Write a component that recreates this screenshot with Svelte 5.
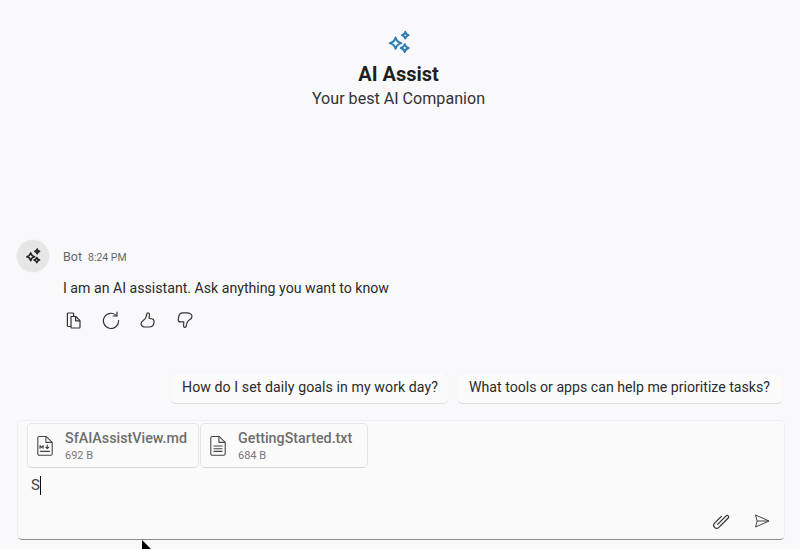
<script>
  const suggestions = [
    "How do I set daily goals in my work day?",
    "What tools or apps can help me prioritize tasks?",
  ];
  const files = [
    { name: "SfAIAssistView.md", size: "692 B", kind: "md" },
    { name: "GettingStarted.txt", size: "684 B", kind: "txt" },
  ];
  const sparkle = "M7.500 6.500Q8.500 10.500 12.500 11.500Q8.500 12.500 7.500 16.500Q6.500 12.500 2.500 11.500Q6.500 10.500 7.500 6.500Z M16 1.500Q16.500 4 19 4.500Q16.500 5 16 7.500Q15.500 5 13 4.500Q15.500 4 16 1.500Z M15.500 12.500Q16.200 15 19 15.800Q16.200 16.500 15.500 19.200Q14.800 16.500 12 15.800Q14.800 15 15.500 12.500Z";
</script>

<main>
  <header>
    <svg class="logo" width="24" height="24" viewBox="0 0 21 21" fill="none" stroke="#2b7cb3" stroke-width="1.700" stroke-linejoin="round"><path d={sparkle} /></svg>
    <h1>AI Assist</h1>
    <p>Your best AI Companion</p>
  </header>

  <section class="message">
    <div class="avatar">
      <svg width="16" height="16" viewBox="0 0 21 21" fill="none" stroke="#222" stroke-width="2.200" stroke-linejoin="round"><path d={sparkle} /></svg>
    </div>
    <div class="body">
      <div class="meta"><span class="who">Bot</span><span class="time">8:24 PM</span></div>
      <div class="text">I am an AI assistant. Ask anything you want to know</div>
      <div class="actions">
        <svg width="18" height="18" viewBox="0 0 18 18" fill="none" stroke="#333" stroke-width="1.200" stroke-linejoin="round"><path d="M6 15.500H3.200c-.5 0-.8-.3-.8-.8V2.800c0-.5.3-.8.8-.8h4.600c.5 0 .8.300.8.800V5" /><path d="M6 5.500h4.800L15 9.700v6.500c0 .5-.3.800-.8.800H6.800c-.5 0-.8-.3-.8-.8z" /><path d="M10.600 5.500v4.300H15" /></svg>
        <svg width="18" height="18" viewBox="0 0 18 18" fill="none" stroke="#333" stroke-width="1.200" stroke-linecap="round" stroke-linejoin="round"><path d="M14.500 4.600A7.600 7.600 0 1 0 16.600 9.600" /><path d="M15 1.200v3.800h-3.800" /></svg>
        <svg width="18" height="18" viewBox="0 0 18 18" fill="none" stroke="#333" stroke-width="1.200" stroke-linejoin="round"><path d="M9 1.800c1 0 1.500.8 1.500 1.900 0 1.600-.5 2.800-.3 3.600 1.200.6 3.400.4 4.200 1.200 1 1 .8 2.300.5 3.600-.4 2-1.800 3.900-4.400 3.900H6.500C4 16.200 2 14.800 2 12.800c0-1.700 1.300-2.700 2.500-3.500C6.600 8 7.600 5 7.800 3c.1-.7.500-1.200 1.200-1.200z" /></svg>
        <svg width="18" height="18" viewBox="0 0 18 18" fill="none" stroke="#333" stroke-width="1.200" stroke-linejoin="round"><path d="M9 16.400c-1 0-1.500-.8-1.500-1.900 0-1.600.5-2.800.3-3.600H4.200c-1.300 0-2.200-1-2-2.200l.6-3.500C3.200 3.200 4.600 1.800 6.800 1.800h4C13.500 1.800 16 3.200 16 5.400c0 1.700-1.300 2.700-2.500 3.400-2.100 1.300-3.100 4.600-3.300 6.400-.1.700-.5 1.200-1.200 1.200z" /></svg>
      </div>
    </div>
  </section>

  <div class="suggestions">
    {#each suggestions as s}
      <div class="chip">{s}</div>
    {/each}
  </div>

  <section class="composer">
    <div class="files">
      {#each files as f}
        <div class="file">
          <svg width="18" height="22" viewBox="0 0 20 24" fill="none" stroke="#444" stroke-width="1.200" stroke-linejoin="round">
            <path d="M2 3c0-1 .6-1.600 1.600-1.600h7.600L18 8v12.600c0 1-.6 1.600-1.600 1.600H3.600c-1 0-1.600-.6-1.600-1.600z" />
            <path d="M11 1.600V8h7" />
            {#if f.kind === "md"}
              <path d="M4.500 15v-3.500l1.700 2 1.700-2V15M12.500 10.500v4.500M10.500 13l2 2 2-2M4.500 18h11" stroke-width="1.300" />
            {:else}
              <path d="M5 12h10M5 15h10M5 18h10" />
            {/if}
          </svg>
          <div class="info">
            <div class="name">{f.name}</div>
            <div class="size">{f.size}</div>
          </div>
        </div>
      {/each}
    </div>
    <div class="input">S<span class="caret"></span></div>
    <div class="tools">
      <svg width="18" height="18" viewBox="1.500 1.500 15 15" fill="none" stroke="#333" stroke-width="1.050" stroke-linecap="round" stroke-linejoin="round"><path d="M9.350 5.110 3.690 10.770A2.500 2.500 0 0 0 7.230 14.310L15.010 6.530A1.250 1.250 0 0 0 13.240 4.760L6.170 11.830" /></svg>
      <svg width="18" height="18" viewBox="0 0 18 18" fill="none" stroke="#444" stroke-width="1" stroke-linejoin="round"><path d="M2.500 3 16 9 2.500 15 4.200 9z" /><path d="M4.200 9H16" /></svg>
    </div>
  </section>

  <svg class="pointer" width="12" height="12" viewBox="0 0 12 12"><path d="M1 0 L11 10 H1 Z" fill="#000" /></svg>
</main>

<style>
  :global(body) {
    margin: 0;
    background: #f9f9fb;
  }

  main {
    position: relative;
    width: 800px;
    height: 549px;
    overflow: hidden;
    box-sizing: border-box;
    font-family: Roboto, "Noto Sans", sans-serif;
    color: #1f1f1f;
  }

  header {
    display: flex;
    flex-direction: column;
    align-items: center;
    padding-top: 30px;
    margin-left: -3px;
  }

  .logo {
    display: block;
    margin-bottom: 6px;
  }

  h1 {
    margin: 0;
    font-size: 20px;
    font-weight: 700;
    line-height: 28px;
  }

  p {
    margin: 0;
    font-size: 16.100px;
    line-height: 21px;
    color: #333;
  }

  .message {
    display: flex;
    margin-top: 131px;
    padding-left: 17px;
  }

  .avatar {
    width: 32px;
    height: 32px;
    border-radius: 50%;
    background: #e6e6e6;
    box-shadow: 0 0 2px #e6e6e6;
    display: flex;
    align-items: center;
    justify-content: center;
  }

  .body {
    margin-left: 14px;
  }

  .meta {
    display: flex;
    align-items: baseline;
    gap: 6px;
    height: 20px;
    margin-top: 9px;
    color: #666;
    font-size: 12.500px;
  }

  .time {
    font-size: 10.500px;
  }

  .text {
    margin-top: 9px;
    font-size: 14.150px;
    line-height: 20px;
    color: #2a2a2a;
  }

  .actions {
    display: flex;
    gap: 19px;
    margin-top: 13px;
    padding-left: 2px;
  }

  .suggestions {
    display: flex;
    justify-content: flex-end;
    gap: 10px;
    margin-top: 44px;
    padding-right: 18px;
  }

  .chip {
    height: 30px;
    line-height: 29px;
    padding: 0 12px 0 11px;
    font-size: 14.150px;
    color: #2a2a2a;
    background: #fbfbfc;
    border-radius: 5px;
    border-bottom: 1px solid #dcdcdc;
    box-shadow: 0 0 1px #e4e4e4;
  }

  .chip:first-child {
    letter-spacing: 0.07px;
    padding-right: 10px;
  }

  .composer {
    position: relative;
    margin: 16px 15px 0 17px;
    height: 120px;
    box-sizing: border-box;
    background: #fafafb;
    border: 1px solid #efeff1;
    border-bottom: 1px solid #8a8a8a;
    border-radius: 5px;
    padding: 2px 9px;
  }

  .files {
    display: flex;
    gap: 1px;
  }

  .file {
    display: flex;
    align-items: center;
    height: 45px;
    box-sizing: border-box;
    padding-left: 8px;
    background: #fbfbfc;
    border: 1px solid #e6e6e8;
    border-bottom-color: #d6d6d8;
    border-radius: 5px;
  }

  .file:nth-child(1) {
    width: 172px;
  }

  .file:nth-child(2) {
    width: 168px;
  }

  .info {
    margin-left: 11px;
  }

  .name {
    font-size: 14.300px;
    font-weight: 500;
    line-height: 20px;
    color: #6e6e6e;
  }

  .size {
    font-size: 11px;
    line-height: 15px;
    color: #777;
  }

  .input {
    display: flex;
    align-items: center;
    margin: 7px 0 0 4px;
    height: 20px;
    font-size: 15px;
    color: #444;
  }

  .caret {
    width: 1px;
    height: 19px;
    background: #111;
  }

  .tools {
    position: absolute;
    right: 13px;
    bottom: 9px;
    display: flex;
    gap: 23px;
  }

  svg {
    display: block;
    flex: none;
  }

  .pointer {
    position: absolute;
    left: 141px;
    top: 540px;
  }
</style>
